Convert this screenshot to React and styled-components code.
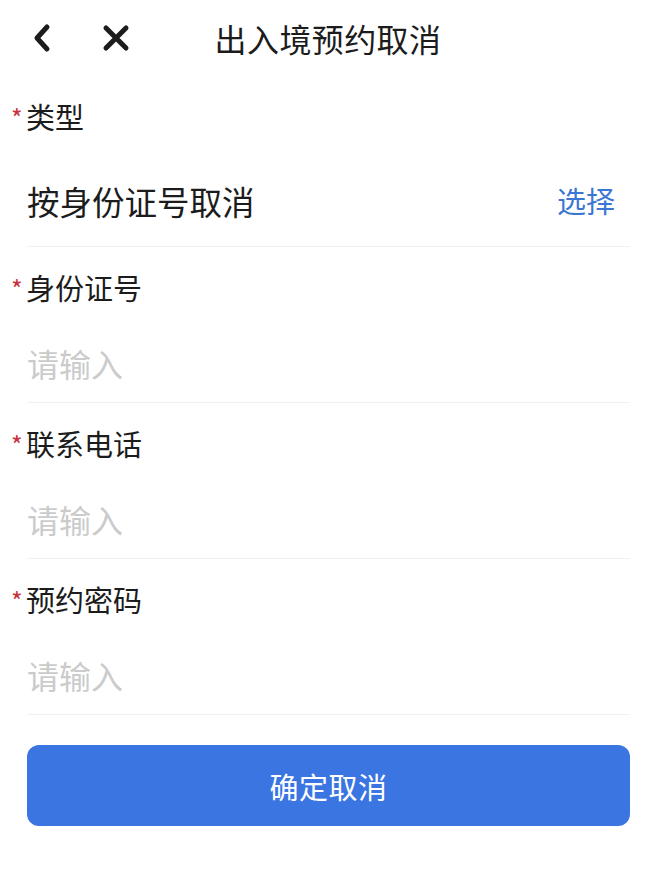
import React from "react";
import styled, { createGlobalStyle } from "styled-components";

const GlobalStyle = createGlobalStyle`
  html, body {
    margin: 0;
    padding: 0;
    background: #ffffff;
  }
  body {
    font-family: "Noto Sans CJK SC", "Noto Sans", sans-serif;
    color: #1c1c1c;
  }
`;

const Page = styled.div`
  width: 656px;
  min-height: 870px;
  background: #ffffff;
`;

const NavBar = styled.div`
  height: 76px;
  display: grid;
  grid-template-columns: 1fr auto 1fr;
  align-items: center;
`;

const NavIcons = styled.div`
  display: flex;
  align-items: center;
  gap: 50px;
  padding-left: 32px;
`;

const IconButton = styled.button`
  border: none;
  background: none;
  padding: 0;
  display: flex;
  align-items: center;
  cursor: pointer;
`;

const Title = styled.h1`
  margin: 0;
  font-size: 32px;
  font-weight: 400;
  line-height: 40px;
  color: #1c1c1c;
  letter-spacing: 0.4px;
`;

const Form = styled.div`
  padding: 0 26px 0 27px;
`;

const Field = styled.div`
  display: flex;
  flex-direction: column;
  padding: 20px 0 ${(p) => (p.$first ? 24 : 17)}px;
  border-bottom: 1px solid #f1f1f1;
`;

const Label = styled.div`
  display: flex;
  align-items: center;
  height: 40px;
  font-size: 29px;
  line-height: 40px;
`;

const Required = styled.span`
  width: 15px;
  margin-left: -16px;
  color: #c8323f;
  font-size: 25px;
  line-height: 25px;
  transform: translateY(1px);
`;

const Row = styled.div`
  display: flex;
  align-items: center;
  justify-content: space-between;
  height: 44px;
  margin-top: ${(p) => (p.$first ? 42 : 34)}px;
  padding-right: 15px;
`;

const Value = styled.span`
  font-size: 32.5px;
  color: #1c1c1c;
`;

const Input = styled.input`
  border: none;
  outline: none;
  padding: 0;
  width: 100%;
  font-family: inherit;
  font-size: 32px;
  color: #1c1c1c;
  background: transparent;
  &::placeholder {
    color: #cbcbcb;
  }
`;

const Pick = styled.span`
  font-size: 29px;
  color: #3b76d2;
`;

const Submit = styled.button`
  display: block;
  width: 100%;
  height: 81px;
  margin-top: 30px;
  border: none;
  border-radius: 12px;
  background: #3a75e2;
  color: #ffffff;
  font-family: inherit;
  font-size: 29px;
  letter-spacing: 0.5px;
  cursor: pointer;
`;

const BackIcon = () => (
  <svg width="20" height="30" viewBox="0 0 20 30">
    <path
      d="M15 4 L5 15 L15 26"
      fill="none"
      stroke="#1c1c1c"
      strokeWidth="5"
      strokeLinecap="round"
      strokeLinejoin="round"
    />
  </svg>
);

const CloseIcon = () => (
  <svg width="28" height="28" viewBox="0 0 28 28">
    <path
      d="M4 4 L24 24 M24 4 L4 24"
      fill="none"
      stroke="#1c1c1c"
      strokeWidth="5"
      strokeLinecap="round"
    />
  </svg>
);

const fields = ["身份证号", "联系电话", "预约密码"];

const App = () => {
  return (
    <Page>
      <GlobalStyle />
      <NavBar>
        <NavIcons>
          <IconButton>
            <BackIcon />
          </IconButton>
          <IconButton>
            <CloseIcon />
          </IconButton>
        </NavIcons>
        <Title>出入境预约取消</Title>
        <div />
      </NavBar>
      <Form>
        <Field $first>
          <Label>
            <Required>*</Required>类型
          </Label>
          <Row $first>
            <Value>按身份证号取消</Value>
            <Pick>选择</Pick>
          </Row>
        </Field>
        {fields.map((name) => (
          <Field key={name}>
            <Label>
              <Required>*</Required>
              {name}
            </Label>
            <Row>
              <Input placeholder="请输入" />
            </Row>
          </Field>
        ))}
        <Submit>确定取消</Submit>
      </Form>
    </Page>
  );
};

export default App;
